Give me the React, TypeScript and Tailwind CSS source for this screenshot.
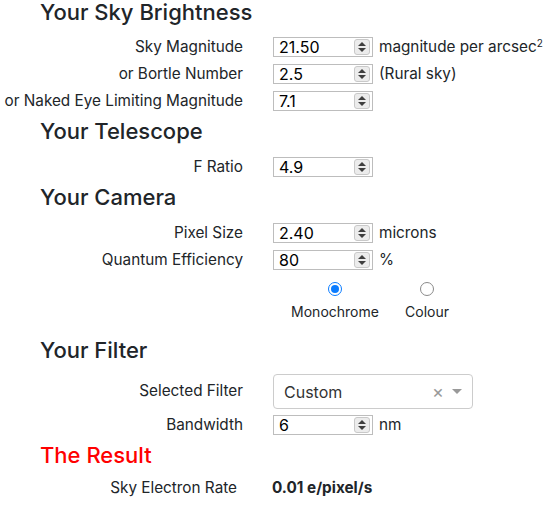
import React from 'react';

const font = { fontFamily: 'Inter, "Liberation Sans", sans-serif' };

const Spinner = () => (
    <span className="absolute right-[2px] top-[1px] flex h-[16px] w-[16px] flex-col items-center justify-center gap-[2px] rounded-[3px] border border-[#c9c9c9] bg-[#ececec]">
        <span className="h-0 w-0 border-x-[4px] border-b-[4px] border-x-transparent border-b-[#3f3f3f]" />
        <span className="h-0 w-0 border-x-[4px] border-t-[4px] border-x-transparent border-t-[#3f3f3f]" />
    </span>
);

const NumberBox = ({ value }: { value: string }) => (
    <div className="relative flex h-[20px] w-[100px] items-center border border-[#bdbdbd] bg-white">
        <input
            readOnly
            value={value}
            className="block h-[18px] w-full bg-transparent p-0 pl-[5px] text-[16px] leading-[18px] text-black outline-none"
            style={font}
        />
        <Spinner />
    </div>
);

type RowProps = { label: string; value: string; unit?: React.ReactNode; className?: string };

const Row = ({ label, value, unit, className = '' }: RowProps) => (
    <div className={`flex h-[20px] items-center ${className}`}>
        <div className="w-[243px] whitespace-nowrap text-right text-[15.3px] text-[#212529]">{label}</div>
        <div className="ml-[30px]">
            <NumberBox value={value} />
        </div>
        {unit && <div className="ml-[6px] whitespace-nowrap text-[15.3px] text-[#212529]">{unit}</div>}
    </div>
);

const Heading = ({ children, className = '' }: { children: React.ReactNode; className?: string }) => (
    <h4 className={`pl-[40px] text-[22px] font-medium leading-[24px] text-[#212529] ${className}`}>{children}</h4>
);

export default function App() {
    return (
        <div className="h-[507px] w-[549px] overflow-hidden bg-white" style={font}>
            {/* Sky */}
            <Heading>Your Sky Brightness</Heading>
            <Row
                className="mt-[13px]"
                label="Sky Magnitude"
                value="21.50"
                unit={<>magnitude per arcsec<sup className="text-[10px]">2</sup></>}
            />
            <Row className="mt-[7px]" label="or Bortle Number" value="2.5" unit="(Rural sky)" />
            <Row className="mt-[7px]" label="or Naked Eye Limiting Magnitude" value="7.1" />

            {/* Telescope */}
            <Heading className="mt-[8px]">Your Telescope</Heading>
            <Row className="mt-[14px]" label="F Ratio" value="4.9" />

            {/* Camera */}
            <Heading className="mt-[8px]">Your Camera</Heading>
            <Row className="mt-[14px]" label="Pixel Size" value="2.40" unit="microns" />
            <Row className="mt-[7px]" label="Quantum Efficiency" value="80" unit="%" />

            <div className="mt-[12px] flex text-[14px] text-[#212529]">
                <div className="ml-[289px] flex w-[92px] flex-col items-center">
                    <span className="flex h-[14px] w-[14px] items-center justify-center rounded-full border-[1.5px] border-[#0a7cff] bg-white">
                        <span className="h-[8px] w-[8px] rounded-full bg-[#0a7cff]" />
                    </span>
                    <span className="mt-[7px] leading-[18px]">Monochrome</span>
                </div>
                <div className="flex w-[92px] flex-col items-center">
                    <span className="h-[14px] w-[14px] rounded-full border border-[#8a8a8a] bg-white" />
                    <span className="mt-[7px] leading-[18px]">Colour</span>
                </div>
            </div>

            {/* Filter */}
            <Heading className="mt-[17px]">Your Filter</Heading>
            <div className="mt-[12px] flex h-[35px] items-center">
                <div className="w-[243px] text-right text-[15.3px] text-[#212529]">Selected Filter</div>
                <div className="ml-[30px] flex h-[35px] w-[200px] items-center rounded-[4px] border border-[#cccccc] bg-white pl-[10px] pr-[10px]">
                    <span className="flex-1 text-[16px] text-[#333333]">Custom</span>
                    <span className="text-[18px] leading-none text-[#999999]">×</span>
                    <span className="ml-[8px] h-0 w-0 border-x-[5px] border-t-[5px] border-x-transparent border-t-[#999999]" />
                </div>
            </div>
            <Row className="mt-[6px]" label="Bandwidth" value="6" unit="nm" />

            {/* Result */}
            <Heading className="mt-[8px] !text-[#ff0000]">The Result</Heading>
            <div className="mt-[11px] flex h-[20px] items-center text-[15.3px] text-[#212529]">
                <div className="w-[237px] text-right">Sky Electron Rate</div>
                <div className="ml-[35px] font-bold">0.01 e/pixel/s</div>
            </div>
        </div>
    );
}
